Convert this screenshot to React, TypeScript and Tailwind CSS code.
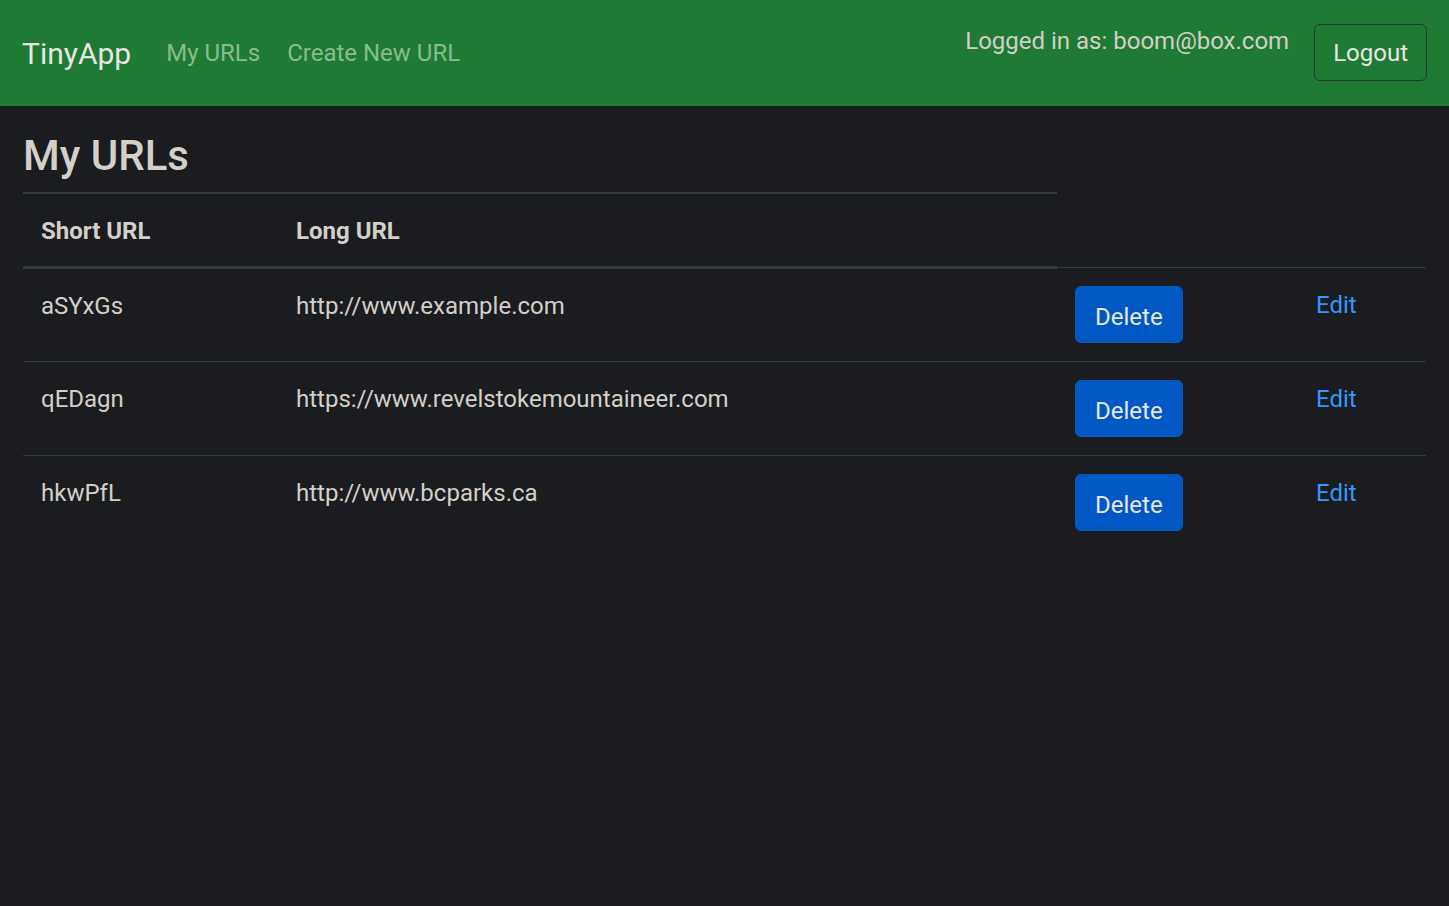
const urls = [
  { short: "aSYxGs", long: "http://www.example.com" },
  { short: "qEDagn", long: "https://www.revelstokemountaineer.com" },
  { short: "hkwPfL", long: "http://www.bcparks.ca" },
]

export default function App() {
  return (
    <div
      className="min-h-[906px] bg-[#1b1c1f] text-[#d3cfc9] text-[24px] leading-[36px]"
      style={{ fontFamily: "Roboto, 'Noto Sans', sans-serif" }}
    >
      {/* Navbar */}
      <nav className="h-[106px] bg-[#1f7a33] flex items-center justify-between pl-[22px] pr-[22px]">
        <div className="flex items-center">
          <span className="text-[30px] leading-[45px] text-[#e8e6e3] mr-[35px]">TinyApp</span>
          <a className="text-[#86bd8f] mr-[27px]">My URLs</a>
          <a className="text-[#86bd8f]">Create New URL</a>
        </div>
        <div className="flex items-start gap-[25px] self-start pt-[24px]">
          <span className="text-[#d3cfc9] -mt-[1px]">Logged in as: boom@box.com</span>
          <button className="h-[57px] px-[18px] border border-[#2f3336] rounded-[6px] text-[#e8e6e3]">
            Logout
          </button>
        </div>
      </nav>

      {/* Content */}
      <main className="px-[23px] pt-[25px]">
        <h1 className="text-[42px] leading-[50px] mb-[11px] font-medium">My URLs</h1>
        <table className="w-full border-collapse">
          <thead>
            <tr>
              <th className="w-[255px] text-left font-bold px-[18px] pt-[19px] pb-[17px] border-t-[2px] border-b-[3px] border-[#35393c]">
                Short URL
              </th>
              <th className="w-[779px] text-left font-bold px-[18px] pt-[19px] pb-[17px] border-t-[2px] border-b-[3px] border-[#35393c]">
                Long URL
              </th>
            </tr>
          </thead>
          <tbody>
            {urls.map((u) => (
              <tr key={u.short} className="border-t border-[#35393c] align-top">
                <td className="px-[18px] pt-[19px] pb-[17px]">{u.short}</td>
                <td className="px-[18px] pt-[19px] pb-[17px]">{u.long}</td>
                <td className="w-[241px] px-[18px] py-[18px]">
                  <button className="h-[57px] px-[19px] bg-[#0058c4] border border-[#0a5ab8] rounded-[6px] text-[#e8e6e3]">
                    <span className="block translate-y-[2px]">Delete</span>
                  </button>
                </td>
                <td className="px-[18px] pt-[19px] pb-[17px]">
                  <a className="text-[#3597ff]">Edit</a>
                </td>
              </tr>
            ))}
          </tbody>
        </table>
      </main>
    </div>
  )
}
